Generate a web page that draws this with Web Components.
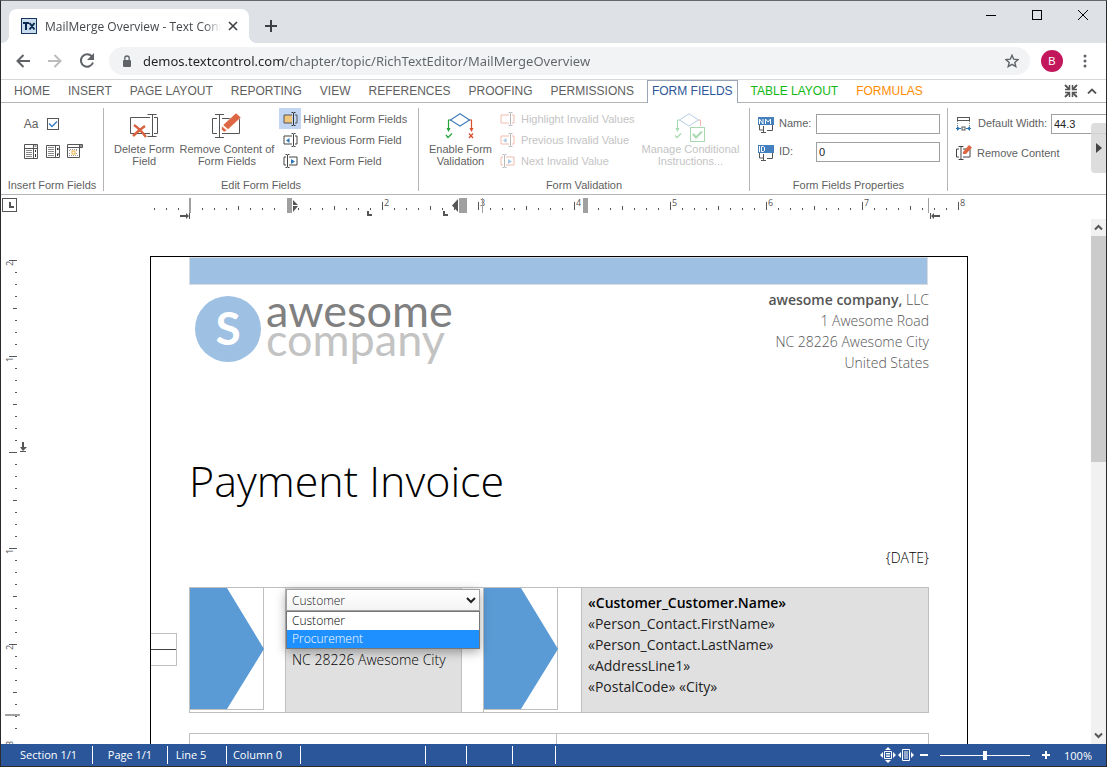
<!DOCTYPE html>
<html lang="en">
<head>
<meta charset="utf-8">
<title>MailMerge Overview - Text Control</title>
<style>
  html, body { margin: 0; height: 100%; }
  body { font-family: "Liberation Sans", Arial, sans-serif; font-size: 11px; color: #5f5f5f; }
</style>
</head>
<body>
<app-window>
  <browser-tabs></browser-tabs>
  <browser-toolbar></browser-toolbar>
  <ribbon-tabs></ribbon-tabs>
  <ribbon-panel></ribbon-panel>
  <editor-view></editor-view>
  <status-bar></status-bar>
</app-window>

<script>
/* ======== ICONS ======== */
// text cursor inside a field box, shared by most of the form field icons
const fieldIcon = (box, beam, extra = '') => `
  <path d="M9 3H1v8h8M12 3h2v8h-2" fill="none" stroke="${box}"/>
  <path d="M8.500 .5h1.500l.5.5.5-.5h1.500M8.500 13.500h1.500l.5-.5.5.5h1.500M10.500 1v12" fill="none" stroke="${beam}"/>${extra}`;
const nextIcon = (box, beam, arrow) => `
  <path d="M3 3H1v8h2M6 3h8v8H6" fill="none" stroke="${box}"/>
  <path d="M2.500 .5h1.500l.5.5.5-.5h1.500M2.500 13.500h1.500l.5-.5.5.5h1.500M4.500 1v12" fill="none" stroke="${beam}"/>
  <path d="M8 5l4 2.500-4 2.500z" fill="${arrow}"/>`;
const prevArrow = color => `<path d="M6.500 5L3 7.500 6.500 10z" fill="${color}"/>`;

const ICONS = {
  tx: [16, 16, `<rect x=".5" y=".5" width="15" height="15" fill="#c9dcee" stroke="#17365d"/>
    <path d="M2 5h6M5 5v7M8.500 5l5 6.500M13.500 5l-5 6.500" stroke="#0b2a52" stroke-width="2" fill="none"/>`],
  close: [10, 10, `<path d="M1 1l8 8M9 1L1 9" stroke="#3c4043" stroke-width="1.600"/>`],
  plus: [12, 12, `<path d="M6 0v12M0 6h12" stroke="#3c4043" stroke-width="2"/>`],
  winMin: [10, 10, `<path d="M0 5.500h10" stroke="#000"/>`],
  winMax: [10, 10, `<rect x=".5" y=".5" width="9" height="9" fill="none" stroke="#000"/>`],
  winClose: [10, 10, `<path d="M0 0l10 10M10 0L0 10" stroke="#000"/>`],
  back: [14, 14, `<path d="M14 7H1.500M7.500 1l-6 6 6 6" fill="none" stroke="#5f6368" stroke-width="2"/>`],
  forward: [14, 14, `<path d="M0 7h12.500M6.500 1l6 6-6 6" fill="none" stroke="#babcbe" stroke-width="2"/>`],
  reload: [16, 16, `<path d="M12.800 3.400A6.200 6.200 0 1 0 14 9.500" fill="none" stroke="#5f6368" stroke-width="2"/><path d="M15 0v7H8z" fill="#5f6368"/>`],
  lock: [10, 13, `<rect x="1" y="5" width="8" height="7" rx="1" fill="#5f6368"/><path d="M2.800 5V3.200a2.200 2.200 0 0 1 4.400 0V5" fill="none" stroke="#5f6368" stroke-width="1.300"/>`],
  star: [14, 14, `<path d="M7 1.300l1.700 3.900 4.300.4-3.200 2.800 1 4.200L7 10.400l-3.800 2.200 1-4.200L1 5.600l4.300-.4z" fill="none" stroke="#5f6368" stroke-width="1.400"/>`],
  dots: [4, 14, `<circle cx="2" cy="2" r="1.500"/><circle cx="2" cy="7" r="1.500"/><circle cx="2" cy="12" r="1.500"/>`],
  shrink: [14, 14, `<path d="M1 1l4 4M13 1L9 5M1 13l4-4M13 13L9 9" stroke="#555" stroke-width="1.800"/>
    <path d="M5.500 1v4.500H1M8.500 1v4.500H13M5.500 13V8.500H1M8.500 13V8.500H13" fill="none" stroke="#555" stroke-width="1.500"/>`],
  up: [10, 6, `<path d="M1 5.500l4-4 4 4" fill="none" stroke="#555" stroke-width="1.800"/>`],
  checkField: [12, 12, `<rect x=".5" y=".5" width="11" height="11" fill="#fff" stroke="#555"/><path d="M2 5.500l3 3 5-5" fill="none" stroke="#3a80c4" stroke-width="1.500"/>`],
  combo: [15, 15, `<path d="M.5.5h13v14H.5zM.5 4.500h13M9.500.5v14" fill="none" stroke="#555"/>
    <path d="M2 6.500h6M2 8.500h6M2 10.500h6M2 12.500h6" stroke="#888"/><path d="M10.500 2h2M11.500 6v2M11.500 10v3" stroke="#333"/>`],
  listBox: [14, 13, `<path d="M.5.5h13v12H.5zM9.500.5v12" fill="none" stroke="#555"/>
    <path d="M2 2.500h6M2 4.500h6M2 6.500h6M2 8.500h6M2 10.500h6" stroke="#888"/><path d="M11.500 3v2M11.500 9v2M11 4h2M11 9h2" stroke="#333"/>`],
  datePick: [16, 15, `<path d="M.5 3.500h12v10H.5zM.5.5h15v3H.5zM12.500.5v3" fill="none" stroke="#555"/>
    <path d="M2 6.500h2M9 6.500h2M2 9.500h2M9 9.500h2M2 11.500h9M3 5.500h8" stroke="#999" stroke-dasharray="1 1"/>
    <rect x="5" y="7" width="3" height="3" fill="#fff" stroke="#f0b040"/><path d="M13 2h2" stroke="#333"/>`],
  deleteField: [28, 25, `<path d="M20 4.500H.5v16H20M24 4.500h3.500v16H24" fill="none" stroke="#555"/>
    <path d="M17.500 1.500h9M17.500 23.500h9M22.500 1.500v22" fill="none" stroke="#555"/>
    <path d="M4 12q6 4 12 12M3 23q6-6 12-10" fill="none" stroke="#d9623f" stroke-width="2.500"/>`],
  removeField: [29, 26, `<path d="M5 5.500H.5v15H5M10 5.500h17.500v15H10" fill="none" stroke="#555"/>
    <path d="M3 1.500h9M3 24.500h9M7.500 1.500v23" fill="none" stroke="#555"/>
    <path d="M24 0l5 4.500-13 12-5-4.500zM10 13l5 4.500-3 1.500-2.500-2.500z" fill="#dd6644" stroke="#fff" stroke-width=".5"/>`],
  hiField: [15, 14, `<rect x="1" y="3" width="8" height="8" fill="#f2c57c"/>` + fieldIcon('#555', '#333')],
  prevField: [15, 14, fieldIcon('#444', '#444', prevArrow('#2e75b6'))],
  nextField: [15, 14, nextIcon('#444', '#444', '#2e75b6')],
  hiBad: [15, 14, fieldIcon('#f2bcae', '#b8b8b8')],
  prevBad: [15, 14, fieldIcon('#f2bcae', '#b8b8b8', prevArrow('#a9c8e4'))],
  nextBad: [15, 14, nextIcon('#f2bcae', '#b8b8b8', '#a9c8e4')],
  validate: [30, 26, `<path d="M6 7H3.500v10" fill="none" stroke="#27a33b" stroke-width="1.200"/>
    <path d="M24 7h2.500v11" fill="none" stroke="#d9502f" stroke-width="1.200"/>
    <path d="M1.500 15h4l-2 4z" fill="#27a33b"/><path d="M24.500 15h4l-2 4z" fill="#d9502f"/>
    <path d="M5.500 7L15 .8 24.500 7 15 13z" fill="#fff" stroke="#4682bd" stroke-width="1.200"/>
    <path d="M1 22l2 2.500 4-4" fill="none" stroke="#27a33b" stroke-width="1.300"/><path d="M24 20.500l4 4.500M28 20.500l-4 4.500" stroke="#d9502f" stroke-width="1.300"/>`],
  conditions: [30, 29, `<g opacity=".4"><path d="M5 7H2.500v11" fill="none" stroke="#27a33b"/><path d="M23 7h2.500v6" fill="none" stroke="#d9502f"/>
    <path d="M.5 15h4l-2 4z" fill="#27a33b"/><path d="M4.500 7L14 .8 23.500 7 14 13z" fill="#fff" stroke="#4682bd"/>
    <path d="M0 22.500l2 2 4-4" fill="none" stroke="#27a33b" stroke-width="1.300"/>
    <rect x="15.500" y="14.500" width="14" height="14" fill="#fff" stroke="#27a33b"/><path d="M18 21l3 3.500 6-6" fill="none" stroke="#27a33b" stroke-width="2"/></g>`],
  nameTag: [16, 17, `<path d="M1.500 9v5H6M9 14.500h5.500V9M3 16.500h5M5.500 10v6" fill="none" stroke="#555"/><rect y="1" width="16" height="8" fill="#4480bd"/>
    <path d="M1.500 8V3l3.500 5V3M7.500 8V3l2.500 3 2.500-3v5" fill="none" stroke="#fff"/>`],
  idTag: [16, 17, `<path d="M1.500 9v5H6M9 14.500h5.500V9M3 16.500h5M5.500 10v6" fill="none" stroke="#555"/><rect y="1" width="16" height="8" fill="#4480bd"/>
    <path d="M1.500 2v6M3.500 2.500v5h2l1-1v-3l-1-1z" fill="none" stroke="#fff"/>`],
  width: [15, 16, `<rect x="1.500" y="1.500" width="12" height="3" fill="none" stroke="#555"/>
    <path d="M1.500 5v5M13.500 5v5" stroke="#888" stroke-dasharray="1 1"/><rect x="6" y="11" width="3" height="3" fill="none" stroke="#555"/>
    <path d="M0 12.500h5M10 12.500h5" stroke="#2e75b6"/><path d="M1 10l3 2.500L1 15zM14 10l-3 2.500 3 2.500z" fill="#2e75b6"/>`],
  removeSmall: [16, 15, `<path d="M3 4H.5v8H3M7 4h7v8H7" fill="none" stroke="#444"/>
    <path d="M2.500 1.500h5M2.500 14.500h5M5 1.500v13" fill="none" stroke="#444"/><path d="M13 0l3 2.500-6 6.500H7V7z" fill="#dd6644"/>`],
  triRight: [6, 10, `<path d="M0 0l6 5-6 5z" fill="#444"/>`],
  chevUp: [9, 7, `<path d="M1 5.500L4.500 2 8 5.500" fill="none" stroke="#555" stroke-width="2"/>`],
  chevDown: [9, 7, `<path d="M1 1.500L4.500 5 8 1.500" fill="none" stroke="#555" stroke-width="2"/>`],
  tabStop: [15, 14, `<rect x=".5" y=".5" width="14" height="13" fill="#fff" stroke="#555"/><path d="M8 4v5h4" fill="none" stroke="#555" stroke-width="2"/>`],
  fitPage: [16, 16, `<path d="M8 0l3 3H5zM8 16l3-3H5zM0 8l3-3v6zM16 8l-3-3v6z" fill="#fff"/><path d="M4.500 4.500h7v7h-7z" fill="none" stroke="#fff"/><path d="M6 6.500h4M6 8h4M6 9.500h4" stroke="#fff"/>`],
  fitWidth: [16, 16, `<path d="M0 8l3-3v6zM16 8l-3-3v6z" fill="#fff"/><path d="M4.500 2.500h7v11h-7z" fill="none" stroke="#fff"/><path d="M6 5h4M6 7h4M6 9h4M6 11h4" stroke="#fff"/>`],
  minus: [8, 8, `<path d="M0 4h8" stroke="#fff" stroke-width="2"/>`],
  add: [8, 8, `<path d="M0 4h8M4 0v8" stroke="#fff" stroke-width="2"/>`]
};

class UiIcon extends HTMLElement {
  constructor() {
    super();
    const shadow = this.attachShadow({ mode: 'open' });
    const [w, h, body] = ICONS[this.getAttribute('name')];
    shadow.innerHTML = `
      <style>
        :host { display: inline-flex; flex: none; }
        svg { display: block; fill: #5f6368; }
      </style>
      <svg width="${w}" height="${h}" viewBox="0 0 ${w} ${h}" aria-hidden="true">${body}</svg>`;
  }
}

/* ======== WINDOW ======== */
class AppWindow extends HTMLElement {
  constructor() {
    super();
    this.attachShadow({ mode: 'open' }).innerHTML = `
      <style>
        :host {
          display: flex;
          flex-direction: column;
          box-sizing: border-box;
          height: 100vh;
          overflow: hidden;
          background: #fff;
          border: 1px solid #2b2b2e;
          border-top-color: #66676a;
        }
      </style>
      <slot></slot>`;
  }
}

class BrowserTabs extends HTMLElement {
  constructor() {
    super();
    this.attachShadow({ mode: 'open' }).innerHTML = `
      <style>
        :host { display: flex; height: 42px; flex: none; background: #dee1e6; font: 12px "Open Sans", "Noto Sans", sans-serif; }
        .tab {
          position: relative;
          display: flex;
          align-items: center;
          box-sizing: border-box;
          width: 240px;
          margin: 8px 0 0 8px;
          padding: 0 11px 0 12px;
          background: #fff;
          border-radius: 8px 8px 0 0;
          color: #45494d;
        }
        .tab::before, .tab::after { content: ""; position: absolute; bottom: 0; width: 8px; height: 8px; }
        .tab::before { left: -8px; background: radial-gradient(circle at 0 0, transparent 8px, #fff 8px); }
        .tab::after { right: -8px; background: radial-gradient(circle at 100% 0, transparent 8px, #fff 8px); }
        .title {
          flex: 1;
          margin: 0 7px 0 8px;
          overflow: hidden;
          white-space: nowrap;
          -webkit-mask: linear-gradient(to left, transparent, #000 16px);
          mask: linear-gradient(to left, transparent, #000 16px);
        }
        button { display: flex; align-items: center; justify-content: center; padding: 0; border: 0; background: none; }
        .new { width: 28px; margin: 8px 0 0 8px; }
        .controls { display: flex; margin-left: auto; height: 28px; }
        .controls button { width: 46px; }
      </style>
      <div class="tab">
        <ui-icon name="tx"></ui-icon>
        <span class="title">MailMerge Overview - Text Control</span>
        <button aria-label="Close tab"><ui-icon name="close"></ui-icon></button>
      </div>
      <button class="new" aria-label="New tab"><ui-icon name="plus"></ui-icon></button>
      <div class="controls">
        <button aria-label="Minimize"><ui-icon name="winMin"></ui-icon></button>
        <button aria-label="Maximize"><ui-icon name="winMax"></ui-icon></button>
        <button aria-label="Close"><ui-icon name="winClose"></ui-icon></button>
      </div>`;
  }
}

class BrowserToolbar extends HTMLElement {
  constructor() {
    super();
    this.attachShadow({ mode: 'open' }).innerHTML = `
      <style>
        :host { display: flex; align-items: center; flex: none; height: 36px; padding: 0 5px 0 6px; background: #fff; border-bottom: 1px solid #d5d7da; }
        button { display: flex; align-items: center; justify-content: center; width: 32px; height: 28px; padding: 0; border: 0; background: none; }
        .address { display: flex; flex: 1; align-items: center; height: 28px; margin-left: 6px; padding: 0 2px 0 13px; background: #f1f3f4; border-radius: 14px; }
        input {
          flex: 1;
          min-width: 0;
          margin-left: 11px;
          padding: 0;
          border: 0;
          outline: 0;
          font: 13px "Noto Sans", "Open Sans", sans-serif;
          color: transparent;
          background: linear-gradient(to right, #202124 142px, #5f6368 142px);
          -webkit-background-clip: text;
          background-clip: text;
        }
        .avatar { width: 22px; height: 22px; margin: 0 6px 0 11px; border-radius: 50%; background: #c2185b; color: #fff; font: 11px "Liberation Sans", sans-serif; }
      </style>
      <button aria-label="Back"><ui-icon name="back"></ui-icon></button>
      <button aria-label="Forward"><ui-icon name="forward"></ui-icon></button>
      <button aria-label="Reload"><ui-icon name="reload"></ui-icon></button>
      <div class="address">
        <ui-icon name="lock"></ui-icon>
        <input type="text" aria-label="Address" value="demos.textcontrol.com/chapter/topic/RichTextEditor/MailMergeOverview">
        <button aria-label="Bookmark"><ui-icon name="star"></ui-icon></button>
      </div>
      <button class="avatar">B</button>
      <button aria-label="Menu"><ui-icon name="dots"></ui-icon></button>`;
  }
}

/* ======== RIBBON ======== */
class RibbonTabs extends HTMLElement {
  constructor() {
    super();
    this.attachShadow({ mode: 'open' }).innerHTML = `
      <style>
        :host { display: flex; flex: none; height: 22px; padding-left: 4px; border-bottom: 1px solid #b5b5b5; }
        button {
          box-sizing: border-box;
          height: 22px;
          margin: 0 4px;
          padding: 0 4px 2px;
          border: 1px solid transparent;
          border-bottom: 0;
          background: none;
          font: 12px "Liberation Sans", Arial, sans-serif;
          color: #5f5f5f;
          white-space: nowrap;
        }
        .active { height: 23px; padding-bottom: 3px; background: #fff; border-color: #9aa5b5; color: #2b579a; }
        .green { color: #12b812; }
        .orange { color: #ff8c00; }
        .tools { display: flex; align-items: center; gap: 9px; margin-left: auto; padding-right: 9px; }
        .tools button { margin: 0; padding: 0; border: 0; display: flex; align-items: center; }
      </style>
      <button>HOME</button><button>INSERT</button><button>PAGE LAYOUT</button><button>REPORTING</button>
      <button>VIEW</button><button>REFERENCES</button><button>PROOFING</button><button>PERMISSIONS</button>
      <button class="active">FORM FIELDS</button>
      <button class="green">TABLE LAYOUT</button><button class="orange">FORMULAS</button>
      <div class="tools">
        <button aria-label="Exit full screen"><ui-icon name="shrink"></ui-icon></button>
        <button aria-label="Collapse ribbon"><ui-icon name="up"></ui-icon></button>
      </div>`;
  }
}

class RibbonGroup extends HTMLElement {
  constructor() {
    super();
    this.attachShadow({ mode: 'open' }).innerHTML = `
      <style>
        :host { display: flex; flex: none; flex-direction: column; box-sizing: border-box; height: 83px; margin-top: 5px; border-right: 1px solid #b5b5b5; }
        .body { display: flex; flex: 1; }
        .label { height: 12px; line-height: 12px; text-align: center; white-space: nowrap; }
      </style>
      <div class="body"><slot></slot></div>
      <div class="label">${this.getAttribute('label') || ''}</div>`;
  }
}

// icon over a two line caption
class RibbonButton extends HTMLElement {
  constructor() {
    super();
    this.attachShadow({ mode: 'open' }).innerHTML = `
      <style>
        :host { display: block; }
        button { display: flex; flex-direction: column; align-items: center; padding: 5px 0 0; border: 0; background: none; font: 11px/12px "Liberation Sans", Arial, sans-serif; color: #5f5f5f; text-align: center; }
        .icon { height: 30px; }
        :host([disabled]) button { color: #c4c4c4; }
      </style>
      <button ${this.hasAttribute('disabled') ? 'disabled' : ''}><span class="icon"><ui-icon name="${this.getAttribute('icon')}"></ui-icon></span><span><slot></slot></span></button>`;
  }
}

// icon beside a single line caption
class RibbonItem extends HTMLElement {
  constructor() {
    super();
    this.attachShadow({ mode: 'open' }).innerHTML = `
      <style>
        :host { display: block; }
        button { display: flex; align-items: center; gap: 2px; height: 21px; padding: 0; border: 0; background: none; font: 11px "Liberation Sans", Arial, sans-serif; color: #5f5f5f; white-space: nowrap; }
        .icon { display: flex; align-items: center; justify-content: center; width: 22px; height: 21px; }
        :host([pressed]) .icon { background: #c2d5f2; }
        :host([disabled]) button { color: #c4c4c4; }
      </style>
      <button ${this.hasAttribute('disabled') ? 'disabled' : ''}><span class="icon"><ui-icon name="${this.getAttribute('icon')}"></ui-icon></span><slot></slot></button>`;
  }
}

class RibbonPanel extends HTMLElement {
  constructor() {
    super();
    this.attachShadow({ mode: 'open' }).innerHTML = `
      <style>
        :host { position: relative; display: flex; flex: none; height: 91px; overflow: hidden; border-bottom: 1px solid #b5b5b5; }
        .insert { width: 103px; }
        .edit { width: 315px; }
        .valid { width: 331px; }
        .props { width: 198px; }
        .more { flex: 1 0 160px; border: 0; }
        .grid { display: grid; grid-template-columns: repeat(3, 22px); grid-template-rows: 26px 28px; align-items: center; justify-items: center; margin: 3px 0 0 19px; font-size: 12px; }
        .grid button { display: flex; padding: 0; border: 0; background: none; font: inherit; color: inherit; }
        .col { display: flex; flex-direction: column; }
        .buttons { display: flex; gap: 5px; margin: 0 5px 0 10px; }
        .last { margin-left: 7px; }
        .fields { display: grid; align-content: start; align-items: center; row-gap: 8px; margin: 6px 0 0 8px; }
        .fields label { padding-bottom: 3px; }
        .props .fields { grid-template-columns: 21px 37px 124px; }
        .more .fields { grid-template-columns: 22px 73px 124px; }
        .more ribbon-item { grid-column: 1 / -1; height: 20px; margin-left: -3px; }
        input { box-sizing: border-box; width: 100%; height: 20px; padding: 0 2px; border: 1px solid #a0a0a0; font: 11px "Liberation Sans", Arial, sans-serif; color: #222; }
        .scroll { position: absolute; right: 0; top: 20px; display: flex; align-items: center; justify-content: center; width: 15px; height: 50px; padding: 0; border: 0; border-radius: 4px 0 0 4px; background: rgba(215, 215, 215, .85); }
      </style>
      <ribbon-group class="insert" label="Insert Form Fields">
        <div class="grid">
          <button>Aa</button>
          <button aria-label="Check box"><ui-icon name="checkField"></ui-icon></button>
          <span></span>
          <button aria-label="Combo box"><ui-icon name="combo"></ui-icon></button>
          <button aria-label="Drop-down list"><ui-icon name="listBox"></ui-icon></button>
          <button aria-label="Date picker"><ui-icon name="datePick"></ui-icon></button>
        </div>
      </ribbon-group>
      <ribbon-group class="edit" label="Edit Form Fields">
        <div class="buttons">
          <ribbon-button icon="deleteField">Delete Form<br>Field</ribbon-button>
          <ribbon-button icon="removeField">Remove Content of<br>Form Fields</ribbon-button>
        </div>
        <div class="col">
          <ribbon-item icon="hiField" pressed>Highlight Form Fields</ribbon-item>
          <ribbon-item icon="prevField">Previous Form Field</ribbon-item>
          <ribbon-item icon="nextField">Next Form Field</ribbon-item>
        </div>
      </ribbon-group>
      <ribbon-group class="valid" label="Form Validation">
        <div class="buttons">
          <ribbon-button icon="validate">Enable Form<br>Validation</ribbon-button>
        </div>
        <div class="col">
          <ribbon-item icon="hiBad" disabled>Highlight Invalid Values</ribbon-item>
          <ribbon-item icon="prevBad" disabled>Previous Invalid Value</ribbon-item>
          <ribbon-item icon="nextBad" disabled>Next Invalid Value</ribbon-item>
        </div>
        <ribbon-button class="last" icon="conditions" disabled>Manage Conditional<br>Instructions...</ribbon-button>
      </ribbon-group>
      <ribbon-group class="props" label="Form Fields Properties">
        <div class="fields">
          <ui-icon name="nameTag"></ui-icon><label for="name">Name:</label><input id="name" type="text">
          <ui-icon name="idTag"></ui-icon><label for="fid">ID:</label><input id="fid" type="text" value="0">
        </div>
      </ribbon-group>
      <ribbon-group class="more">
        <div class="fields">
          <ui-icon name="width"></ui-icon><label for="dw">Default Width:</label><input id="dw" type="text" value="44.3">
          <ribbon-item icon="removeSmall">Remove Content</ribbon-item>
        </div>
      </ribbon-group>
      <button class="scroll" aria-label="Scroll ribbon"><ui-icon name="triRight"></ui-icon></button>`;
  }
}

/* ======== RULERS ======== */
const INCH = 96;

// zero sits on the left text margin, 40px into the page
class HRuler extends HTMLElement {
  constructor() {
    super();
    let marks = '';
    for (let i = -3; i <= 64; i++) {
      const x = 40 + i * INCH / 8;
      if (i % 8 === 0) {
        if (i >= 16) marks += `<rect x="${x}" y="7" width="1" height="8"/><text x="${x + 2}" y="11">${i / 8}</text>`;
      } else {
        const h = i % 4 === 0 ? 4 : 2;
        marks += `<rect x="${x}" y="${15 - h}" width="1" height="${h}"/>`;
      }
    }
    this.attachShadow({ mode: 'open' }).innerHTML = `
      <style>
        :host { display: block; }
        svg { display: block; fill: #555; font: 9px "Open Sans", sans-serif; }
        .bar { fill: #a0a0a0; }
      </style>
      <svg width="818" height="24" aria-hidden="true">
        ${marks}
        <path class="bar" d="M39 3h2v15h-2zM137 3h5v15h-5zM309 3h8v15h-8zM332 3h1v15h-1zM433 3h5v15h-5zM778 3h1v15h-1z"/>
        <path d="M143 5l5 5h-5zM143 11h5l-5 6zM308 4v13l-6-6.500z"/>
        <path d="M30 20h6v-2l3 3-3 3v-2h-6zM39 18h1v6h-1zM790 20h-6v-2l-3 3 3 3v-2h6zM780 18h1v6h-1z"/>
        <path d="M217 16h2v3h3v2h-5zM293 16h2v3h3v2h-5z"/>
      </svg>`;
  }
}

class VRuler extends HTMLElement {
  constructor() {
    super();
    const zero = 233;
    let marks = '';
    for (let i = -16; i <= 23; i++) {
      const y = zero + i * INCH / 8;
      const w = i % 8 === 0 ? 8 : i % 4 === 0 ? 4 : 2;
      marks += `<rect x="${16 - w}" y="${y}" width="${w}" height="1"/>`;
      if (i % 8 === 0 && i !== 0) marks += `<text transform="translate(12 ${y + 6}) rotate(-90)">${Math.abs(i / 8)}</text>`;
    }
    this.attachShadow({ mode: 'open' }).innerHTML = `
      <style>
        :host { display: block; width: 26px; flex: none; overflow: hidden; }
        svg { display: block; fill: #555; font: 9px "Open Sans", sans-serif; }
      </style>
      <svg width="26" height="525" aria-hidden="true">
        ${marks}
        <text transform="translate(12 527) rotate(-90)">3</text>
        <rect x="4" y="495" width="15" height="2" fill="#a0a0a0"/>
        <path d="M21 223h2v5h3l-4 4-3-4h2zM19 232h6v1h-6z"/>
      </svg>`;
  }
}

/* ======== DOCUMENT ======== */
class ScrollBar extends HTMLElement {
  constructor() {
    super();
    this.attachShadow({ mode: 'open' }).innerHTML = `
      <style>
        :host { display: flex; flex-direction: column; flex: none; width: 15px; background: #f1f1f1; }
        button { display: flex; align-items: center; justify-content: center; height: 17px; padding: 0; border: 0; background: none; }
        .track { flex: 1; }
        .thumb { height: 46%; background: #cbcbcb; }
      </style>
      <button aria-label="Scroll up"><ui-icon name="chevUp"></ui-icon></button>
      <div class="track"><div class="thumb"></div></div>
      <button aria-label="Scroll down"><ui-icon name="chevDown"></ui-icon></button>`;
  }
}

class ArrowShape extends HTMLElement {
  constructor() {
    super();
    this.attachShadow({ mode: 'open' }).innerHTML = `
      <style>
        :host { display: block; width: 73px; border: solid #bfbfbf; border-width: 0 1px 1px 0; }
        svg { display: block; }
      </style>
      <svg width="74" height="121" aria-hidden="true"><path d="M0 0h37l37 61-37 60H0z" fill="#5b9bd5"/></svg>`;
  }
}

class DocPage extends HTMLElement {
  constructor() {
    super();
    this.attachShadow({ mode: 'open' }).innerHTML = `
      <style>
        :host {
          position: relative;
          display: block;
          box-sizing: border-box;
          flex: none;
          width: 818px;
          height: 1056px;
          padding: 0 38px;
          background: #fff;
          border: 1px solid #000;
          font: 300 14px/21px "Open Sans", "Noto Sans", sans-serif;
          color: #000;
        }
        .band { height: 26px; margin-right: 1px; background: #9dc0e3; border: 1px solid #d9dde2; }
        header { display: flex; justify-content: space-between; padding-top: 4px; }
        address { font-style: normal; text-align: right; color: #555; }
        b { font-weight: 600; }
        h1 { margin: 78px 0 0; font-size: 43px; line-height: 60px; font-weight: 300; }
        .date { margin: 36px 0 0; text-align: right; }
        .grid { display: grid; grid-template-columns: 96px 176px 22px 98px 1fr; height: 124px; margin-top: 19px; border: solid #bfbfbf; border-width: 1px 1px 1px 0; }
        .grid > div { border-left: 1px solid #bfbfbf; }
        .grid .grey { background: #e0e0e0; }
        .grey p { margin: 0 0 0 6px; white-space: nowrap; }
        .merge { padding-top: 4px; font-weight: 400; color: #222; }
        .merge b { color: #000; }
        .combo { position: relative; z-index: 1; width: 194px; margin-top: 1px; font-size: 12px; box-shadow: 0 3px 10px rgba(0, 0, 0, .35); }
        select { display: block; width: 194px; height: 22px; padding: 0 0 0 1px; border: 1px solid #a0a0a0; border-radius: 0; background: linear-gradient(#fff, #f4f4f4); font: inherit; color: #222; }
        ul { margin: 0; padding: 0; list-style: none; background: #fff; border: 1px solid #767676; }
        li { height: 18px; padding-left: 5px; line-height: 18px; }
        .picked { background: #1e90ff; color: #fff; }
        .second { grid-template-columns: 367px 1fr; margin-top: 20px; }
        .marker { position: absolute; left: 0; top: 376px; width: 25px; height: 31px; border: solid #bfbfbf; border-width: 1px 1px 1px 0; }
        .marker hr { margin: 15px 0 0; border: 0; border-top: 1px solid #444; }
      </style>
      <div class="band"></div>
      <header>
        <company-logo></company-logo>
        <address><b>awesome company,</b> LLC<br>1 Awesome Road<br>NC 28226 Awesome City<br>United States</address>
      </header>
      <h1>Payment Invoice</h1>
      <p class="date">{DATE}</p>
      <div class="grid">
        <div><arrow-shape></arrow-shape></div>
        <div class="grey">
          <div class="combo">
            <select aria-label="Department"><option>Customer</option><option>Procurement</option></select>
            <ul><li>Customer</li><li class="picked">Procurement</li></ul>
          </div>
          <p>NC 28226 Awesome City</p>
        </div>
        <div></div>
        <div><arrow-shape></arrow-shape></div>
        <div class="grey merge">
          <p><b>«Customer_Customer.Name»</b></p>
          <p>«Person_Contact.FirstName»</p>
          <p>«Person_Contact.LastName»</p>
          <p>«AddressLine1»</p>
          <p>«PostalCode» «City»</p>
        </div>
      </div>
      <div class="grid second"><div></div><div></div></div>
      <div class="marker"><hr></div>`;
  }
}

class CompanyLogo extends HTMLElement {
  constructor() {
    super();
    this.attachShadow({ mode: 'open' }).innerHTML = `
      <style>
        :host { display: block; }
        svg { display: block; overflow: visible; font-family: Lato, sans-serif; font-weight: 400; }
      </style>
      <svg width="280" height="80" role="img" aria-label="awesome company">
        <circle cx="39" cy="40" r="33" fill="#9dc0e3"/>
        <text x="39" y="56" font-size="46" font-weight="700" text-anchor="middle" fill="#fff">S</text>
        <text x="77" y="38" font-size="45" fill="#808080">awesome</text>
        <text x="77" y="67" font-size="45" fill="#c3c3c3">company</text>
      </svg>`;
  }
}

class EditorView extends HTMLElement {
  constructor() {
    super();
    this.attachShadow({ mode: 'open' }).innerHTML = `
      <style>
        :host { display: flex; flex: 1; flex-direction: column; min-height: 0; }
        .ruler { display: flex; flex: none; height: 24px; overflow: hidden; padding-right: 15px; }
        .corner { width: 25px; padding: 3px 0 0 1px; }
        .row { display: flex; flex: 1; min-height: 0; }
        .canvas { display: flex; flex: 1; justify-content: center; overflow: hidden; }
        .row .canvas { padding-top: 37px; align-items: flex-start; }
      </style>
      <div class="ruler">
        <div class="corner"><ui-icon name="tabStop"></ui-icon></div>
        <div class="canvas"><h-ruler></h-ruler></div>
      </div>
      <div class="row">
        <v-ruler></v-ruler>
        <div class="canvas"><doc-page></doc-page></div>
        <scroll-bar></scroll-bar>
      </div>`;
  }
}

/* ======== STATUS BAR ======== */
class StatusBar extends HTMLElement {
  constructor() {
    super();
    this.attachShadow({ mode: 'open' }).innerHTML = `
      <style>
        :host { display: flex; align-items: center; flex: none; height: 22px; background: #2b579a; color: #fff; font: 11px "Open Sans", "Noto Sans", sans-serif; }
        span { box-sizing: border-box; height: 18px; line-height: 18px; border-right: 1px solid #fff; text-align: center; white-space: nowrap; }
        .zoom { display: flex; align-items: center; margin-left: auto; padding-right: 14px; gap: 2px; }
        button { display: flex; align-items: center; justify-content: center; padding: 0; border: 0; background: none; }
        .step { width: 16px; height: 16px; }
        input { appearance: none; -webkit-appearance: none; width: 90px; height: 10px; margin: 0 6px; background: linear-gradient(#fff, #fff) center / 100% 1px no-repeat; }
        input::-webkit-slider-thumb { -webkit-appearance: none; width: 4px; height: 9px; background: #fff; }
        output { margin-left: 8px; }
      </style>
      <span style="width:92px;padding-left:4px">Section 1/1</span>
      <span style="width:75px">Page 1/1</span>
      <span style="width:59px;padding-right:12px">Line 5</span>
      <span style="width:74px;padding-right:12px">Column 0</span>
      <span style="width:125px"></span>
      <span style="width:41px"></span>
      <span style="width:46px"></span>
      <span style="width:43px"></span>
      <div class="zoom">
        <button aria-label="Whole page"><ui-icon name="fitPage"></ui-icon></button>
        <button aria-label="Page width"><ui-icon name="fitWidth"></ui-icon></button>
        <button class="step" aria-label="Zoom out"><ui-icon name="minus"></ui-icon></button>
        <input type="range" aria-label="Zoom" min="0" max="200" value="100">
        <button class="step" aria-label="Zoom in"><ui-icon name="add"></ui-icon></button>
        <output>100%</output>
      </div>`;
  }
}

customElements.define('app-window', AppWindow);
customElements.define('browser-tabs', BrowserTabs);
customElements.define('browser-toolbar', BrowserToolbar);
customElements.define('ribbon-tabs', RibbonTabs);
customElements.define('ribbon-panel', RibbonPanel);
customElements.define('ribbon-group', RibbonGroup);
customElements.define('ribbon-button', RibbonButton);
customElements.define('ribbon-item', RibbonItem);
customElements.define('editor-view', EditorView);
customElements.define('h-ruler', HRuler);
customElements.define('v-ruler', VRuler);
customElements.define('doc-page', DocPage);
customElements.define('company-logo', CompanyLogo);
customElements.define('arrow-shape', ArrowShape);
customElements.define('scroll-bar', ScrollBar);
customElements.define('status-bar', StatusBar);
customElements.define('ui-icon', UiIcon);
</script>
</body>
</html>
